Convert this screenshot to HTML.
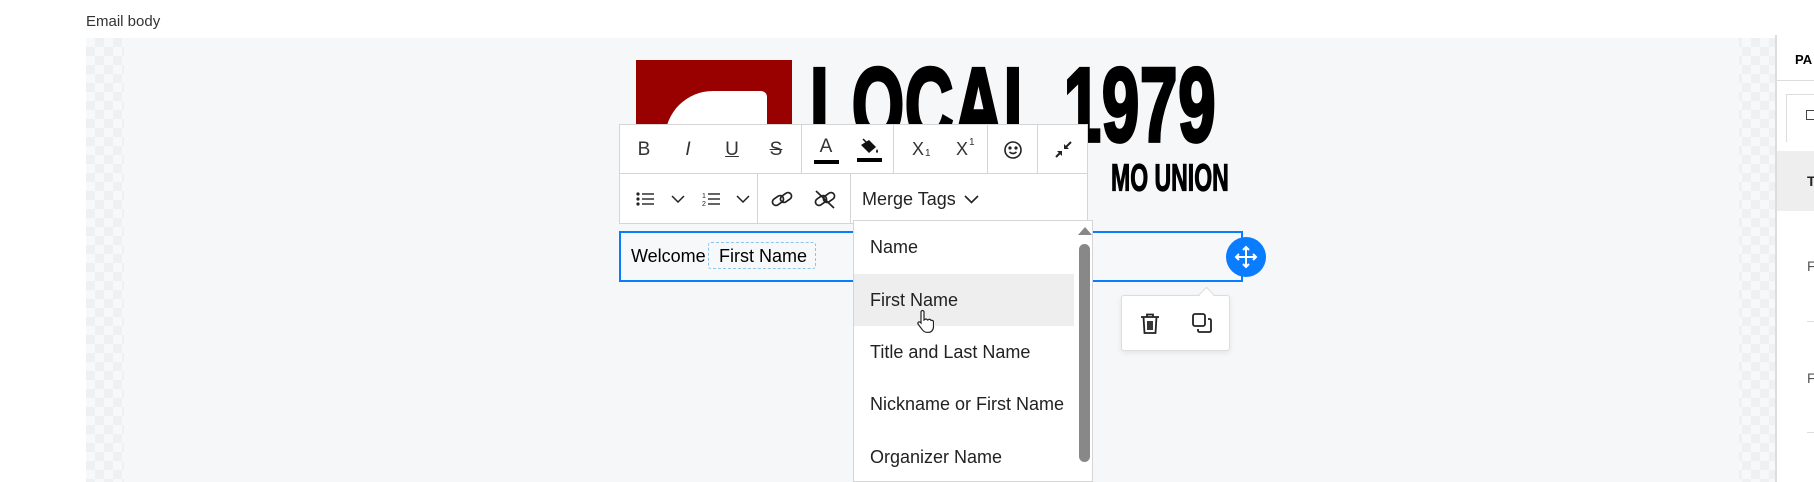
<!DOCTYPE html>
<html><head><meta charset="utf-8"><style>
*{box-sizing:border-box;margin:0;padding:0}
body{width:1814px;height:482px;overflow:hidden;background:#fff;font-family:"Liberation Sans",sans-serif;position:relative;color:#222}
.abs{position:absolute}
.check{background-color:#f7f8fa;background-image:linear-gradient(45deg,#eff0f2 25%,transparent 25%,transparent 75%,#eff0f2 75%),linear-gradient(45deg,#eff0f2 25%,transparent 25%,transparent 75%,#eff0f2 75%);background-size:18px 18px;background-position:0 0,9px 9px}
.ic{position:absolute;top:0;height:49px;display:flex;align-items:center;justify-content:center;width:40px}
.vd{position:absolute;width:1px;background:#d5d5d5}
.item{position:absolute;left:0;width:220px;height:52px;padding-left:16px;font-size:18px;display:flex;align-items:center;color:#222}
</style></head><body>
<div class="abs" style="left:86px;top:13px;font-size:15px;color:#333">Email body</div>
<div class="abs check" style="left:86px;top:38px;width:1690px;height:444px"></div>
<div class="abs" style="left:124px;top:38px;width:1615px;height:444px;background:#f6f7f9"></div>
<div class="abs" style="left:1775px;top:35px;width:2px;height:447px;background:#ddd"></div>
<div class="abs" style="left:1777px;top:35px;width:37px;height:447px;background:#fff"></div>
<div class="abs" style="left:1777px;top:80px;width:37px;height:1px;background:#ddd"></div>
<div class="abs" style="left:1795px;top:52px;font-size:13px;font-weight:bold;color:#000">PA</div>
<div class="abs" style="left:1786px;top:94px;width:28px;height:48px;border:1px solid #ddd;border-bottom:none;border-right:none"></div>
<div class="abs" style="left:1806px;top:110px;width:10px;height:10px;border:1.5px solid #444"></div>
<div class="abs" style="left:1777px;top:151px;width:37px;height:60px;background:#eee"></div>
<div class="abs" style="left:1807px;top:173px;font-size:14px;font-weight:bold;color:#222">T</div>
<div class="abs" style="left:1807px;top:258px;font-size:14px;color:#555">F</div>
<div class="abs" style="left:1807px;top:321px;width:10px;height:1px;background:#ddd"></div>
<div class="abs" style="left:1807px;top:370px;font-size:14px;color:#555">F</div>
<div class="abs" style="left:1807px;top:432px;width:10px;height:1px;background:#ddd"></div>

<!-- logo -->
<div class="abs" style="left:636px;top:60px;width:156px;height:90px;background:#990000;overflow:hidden">
 <div class="abs" style="left:29px;top:31px;width:102px;height:90px;background:#fff;border-radius:48px 6px 0 0"></div>
</div>
<div class="abs" style="left:810px;top:52px;font-family:'Liberation Sans Narrow','Liberation Sans',sans-serif;font-weight:bold;font-size:84px;letter-spacing:1px;color:#000;-webkit-text-stroke:3px #000;transform:scale(0.8,1.25);transform-origin:0 0;line-height:1">LOCAL 1979</div>
<div class="abs" style="left:1111px;top:158px;font-family:'Liberation Sans Narrow','Liberation Sans',sans-serif;font-weight:bold;font-size:32px;color:#000;-webkit-text-stroke:1px #000;transform:scale(0.72,1.2);transform-origin:0 0;line-height:1">MO UNION</div>

<!-- toolbar -->
<div class="abs" style="left:619px;top:124px;width:469px;height:100px;background:#fff;border:1px solid #d5d5d5">
 <div class="abs" style="left:0;top:48px;width:467px;height:1px;background:#d5d5d5"></div>
 <div class="vd" style="left:181px;top:0;height:48px"></div>
 <div class="vd" style="left:273px;top:0;height:48px"></div>
 <div class="vd" style="left:367px;top:0;height:48px"></div>
 <div class="vd" style="left:417px;top:0;height:48px"></div>
 <div class="vd" style="left:137px;top:49px;height:50px"></div>
 <div class="vd" style="left:230px;top:49px;height:50px"></div>
 <div class="ic" style="left:4px;font-size:19px;color:#333">B</div>
 <div class="ic" style="left:48px;font-size:19px;font-style:italic;color:#333">I</div>
 <div class="ic" style="left:92px;font-size:19px;text-decoration:underline;color:#333">U</div>
 <div class="ic" style="left:136px;font-size:19px;text-decoration:line-through;color:#333">S</div>
 <div class="ic" style="left:186px;font-size:19px;color:#333;flex-direction:column">A<div style="width:25px;height:4px;background:#000;margin-top:2px"></div></div>
 <div class="ic" style="left:229px;flex-direction:column"><svg width="22" height="18" viewBox="0 0 22 18"><path d="M3 8 L11 3 L18 10 L11 16 Z" fill="#111"/><path d="M5 2 L14 11" stroke="#111" stroke-width="1.5"/><path d="M19 12 q2 3 0 4 q-2 -1 0 -4z" fill="#111"/></svg><div style="width:25px;height:4px;background:#000;margin-top:3px"></div></div>
 <div class="ic" style="left:278px;font-size:18px;color:#333"><span style="position:relative">X<span style="position:absolute;left:13px;top:9px;font-size:10px">1</span></span></div>
 <div class="ic" style="left:322px;font-size:18px;color:#333"><span style="position:relative">X<span style="position:absolute;left:13px;top:-2px;font-size:10px">1</span></span></div>
 <div class="ic" style="left:373px"><svg width="20" height="20" viewBox="0 0 20 20" fill="none" stroke="#222" stroke-width="1.6"><circle cx="10" cy="10" r="8"/><circle cx="7" cy="8" r=".8" fill="#222"/><circle cx="13" cy="8" r=".8" fill="#222"/><path d="M6.5 12 q3.5 3 7 0"/></svg></div>
 <div class="ic" style="left:423px"><svg width="18" height="18" viewBox="0 0 18 18" fill="#222"><path d="M17 1 L11 7 M2 16 L7 11" stroke="#222" stroke-width="2"/><path d="M10 3 L10 8 L15 8Z M3 10 L8 10 L8 15Z"/></svg></div>
 <div class="ic" style="left:5px;top:49px;height:50px"><svg width="18" height="14" viewBox="0 0 18 14" fill="#222"><circle cx="2" cy="2" r="1.6"/><circle cx="2" cy="7" r="1.6"/><circle cx="2" cy="12" r="1.6"/><rect x="6" y="1.3" width="12" height="1.4"/><rect x="6" y="6.3" width="12" height="1.4"/><rect x="6" y="11.3" width="12" height="1.4"/></svg></div>
 <div class="ic" style="left:38px;top:49px;height:50px"><svg width="14" height="8" viewBox="0 0 14 8" fill="none" stroke="#222" stroke-width="1.5"><path d="M1 1l6 6 6-6"/></svg></div>
 <div class="ic" style="left:71px;top:49px;height:50px"><svg width="18" height="16" viewBox="0 0 18 16" fill="#222"><text x="0" y="7" font-size="7" font-family="Liberation Sans">1</text><text x="0" y="15" font-size="7" font-family="Liberation Sans">2</text><rect x="6" y="2.3" width="12" height="1.4"/><rect x="6" y="7.3" width="12" height="1.4"/><rect x="6" y="12.3" width="12" height="1.4"/></svg></div>
 <div class="ic" style="left:103px;top:49px;height:50px"><svg width="14" height="8" viewBox="0 0 14 8" fill="none" stroke="#222" stroke-width="1.5"><path d="M1 1l6 6 6-6"/></svg></div>
 <div class="ic" style="left:142px;top:49px;height:50px"><svg width="22" height="18" viewBox="0 0 22 18" fill="none" stroke="#222" stroke-width="1.7"><rect x="1" y="7" width="12" height="7" rx="3.5" transform="rotate(-35 7 10.5)"/><rect x="9" y="4" width="12" height="7" rx="3.5" transform="rotate(-35 15 7.5)"/></svg></div>
 <div class="ic" style="left:185px;top:49px;height:50px"><svg width="22" height="20" viewBox="0 0 22 20" fill="none" stroke="#222" stroke-width="1.7"><rect x="1" y="8" width="12" height="7" rx="3.5" transform="rotate(-35 7 11.5)"/><rect x="9" y="5" width="12" height="7" rx="3.5" transform="rotate(-35 15 8.5)"/><path d="M2 2 L20 19"/></svg></div>
 <div class="abs" style="left:242px;top:49px;height:50px;display:flex;align-items:center;font-size:18px;color:#222">Merge Tags <svg style="margin-left:8px" width="15" height="9" viewBox="0 0 15 9" fill="none" stroke="#222" stroke-width="1.6"><path d="M1 1l6.5 6.5 6.5-6.5"/></svg></div>
</div>

<!-- text box -->
<div class="abs" style="left:619px;top:231px;width:624px;height:51px;border:2px solid #0a7cff;background:#f7f8fa"></div>
<div class="abs" style="left:631px;top:246px;font-size:18px;color:#000">Welcome</div>
<div class="abs" style="left:708px;top:242px;width:108px;height:27px;border:1px dashed #8cc4ec;border-radius:3px;font-size:18px;color:#000;padding:3px 0 0 10px">First Name</div>
<div class="abs" style="left:1226px;top:237px;width:40px;height:40px;border-radius:50%;background:#0a7cff"><svg width="40" height="40" viewBox="0 0 40 40" fill="none" stroke="#fff" stroke-width="2"><path d="M20 10v20M10 20h20"/><path d="M17 13l3-3 3 3M17 27l3 3 3-3M13 17l-3 3 3 3M27 17l3 3-3 3"/></svg></div>

<!-- action popup -->
<div class="abs" style="left:1121px;top:295px;width:109px;height:56px;background:#fff;border:1px solid #ddd;border-radius:3px;box-shadow:0 2px 6px rgba(0,0,0,.08)"></div>
<div class="abs" style="left:1201px;top:289px;width:11px;height:11px;background:#fff;border-left:1px solid #ddd;border-top:1px solid #ddd;transform:rotate(45deg)"></div>
<svg class="abs" style="left:1140px;top:313px" width="20" height="22" viewBox="0 0 20 22" fill="none" stroke="#222" stroke-width="1.8"><path d="M1 4h18M7 4V1.5h6V4M3.5 4l1 16h11l1-16M8 8v9M10 8v9M12 8v9"/></svg>
<svg class="abs" style="left:1192px;top:313px" width="20" height="20" viewBox="0 0 20 20" fill="none" stroke="#222" stroke-width="1.8"><rect x="1" y="1" width="12" height="12" rx="2"/><path d="M16 6h1.5a1.5 1.5 0 0 1 1.5 1.5v10a1.5 1.5 0 0 1-1.5 1.5h-10A1.5 1.5 0 0 1 6 17.5V16"/></svg>

<!-- dropdown -->
<div class="abs" style="left:853px;top:220px;width:240px;height:262px;background:#fff;border:1px solid #d5d5d5;overflow:hidden">
 <div class="item" style="top:0">Name</div>
 <div class="item" style="top:53px;background:#eee">First Name</div>
 <div class="item" style="top:105px">Title and Last Name</div>
 <div class="item" style="top:157px">Nickname or First Name</div>
 <div class="item" style="top:210px">Organizer Name</div>
 <div class="abs" style="left:224px;top:6px;width:0;height:0;border-left:7px solid transparent;border-right:7px solid transparent;border-bottom:8px solid #888"></div>
 <div class="abs" style="left:225px;top:23px;width:11px;height:218px;background:#888;border-radius:6px"></div>
</div>
<svg class="abs" style="left:916px;top:310px" width="18" height="24" viewBox="0 0 18 24"><path d="M5 2a1.5 1.5 0 0 1 3 0v8l1-.5a1.5 1.5 0 0 1 2.5.5l1-.3a1.5 1.5 0 0 1 2.5.8l.5-.1a1.5 1.5 0 0 1 2 1.4v5c0 3-2 5.5-5 5.5h-2c-2 0-3-1-4.5-3L2 14a1.5 1.5 0 0 1 2-2l1 1z" fill="#fff" stroke="#222" stroke-width="1.2"/></svg>
</body></html>
